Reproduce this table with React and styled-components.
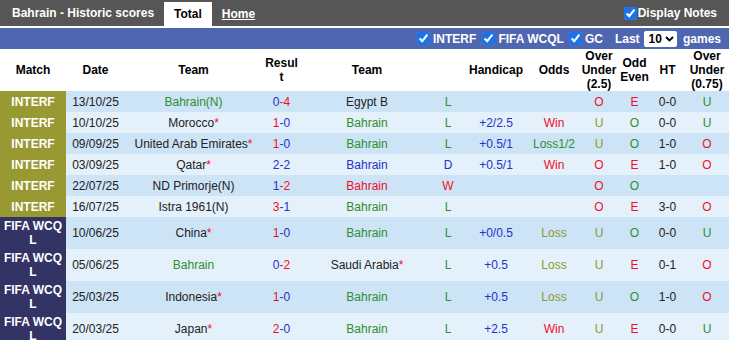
import React from "react";
import styled, { createGlobalStyle } from "styled-components";

const GlobalStyle = createGlobalStyle`
  body {
    margin: 0;
    background: #fff;
    font-family: "Liberation Sans", Arial, sans-serif;
  }
`;

const colors = {
  green: "#2f8f2f",
  olive: "#8c9c2c",
  red: "#f00f2a",
  blue: "#2233cc",
  dark: "#222",
};

const Wrap = styled.div`
  width: 729px;
`;

// Top bar with the title and tabs
const TopBar = styled.div`
  display: flex;
  align-items: flex-end;
  height: 26px;
  background: #565656;
  color: #fff;
  font-size: 12px;
  font-weight: bold;
`;

const Title = styled.div`
  align-self: center;
  padding: 0 10px 0 12px;
`;

const Tab = styled.div`
  height: 24px;
  line-height: 24px;
  padding: 0 10px;
  background: ${(p) => (p.$active ? "#fff" : "transparent")};
  color: ${(p) => (p.$active ? "#000" : "#fff")};
  text-decoration: ${(p) => (p.$active ? "none" : "underline")};
`;

const Notes = styled.label`
  margin-left: auto;
  align-self: center;
  display: flex;
  align-items: center;
  padding-right: 12px;
`;

const Check = styled.input.attrs({ type: "checkbox" })`
  width: 13px;
  height: 13px;
  margin: 0 ${(p) => p.$gap || 3}px 0 0;
  accent-color: #1a73e8;
`;

// Blue filter bar
const FilterBar = styled.div`
  display: flex;
  justify-content: flex-end;
  align-items: center;
  height: 21px;
  margin-top: 2px;
  padding-right: 8px;
  background: #4f66b0;
  color: #fff;
  font-size: 12px;
  font-weight: bold;
`;

const Filter = styled.label`
  display: flex;
  align-items: center;
  margin-left: ${(p) => p.$space || 4}px;
`;

const Select = styled.span`
  display: inline-flex;
  align-items: center;
  gap: 3px;
  height: 16px;
  margin: 0 6px 0 4px;
  padding: 0 3px 0 5px;
  background: #fff;
  color: #000;
  border-radius: 2px;
`;

const Table = styled.table`
  width: 729px;
  border-collapse: collapse;
  table-layout: fixed;
  font-size: 12px;
`;

const Th = styled.th`
  height: 42px;
  padding: 0 ${(p) => (p.$narrow ? 2 : 0)}px;
  line-height: 14px;
  font-weight: bold;
  color: #000;
  text-align: center;
  overflow-wrap: ${(p) => (p.$narrow ? "anywhere" : "normal")};
`;

const Row = styled.tr`
  height: ${(p) => (p.$tall ? 32 : 21)}px;
  background: ${(p) => (p.$dark ? "#cde3f6" : "#e4f0fa")};
`;

const Td = styled.td`
  padding: 0 1px;
  text-align: center;
  white-space: nowrap;
  color: ${(p) => colors[p.$c] || colors.dark};
`;

const MatchCell = styled.td`
  padding: 0 1px;
  text-align: center;
  line-height: 14px;
  font-weight: bold;
  word-break: break-all;
  color: #fff;
  background: ${(p) => (p.$kind === "INTERF" ? "#999933" : "#333366")};
`;

const Tone = styled.span`
  color: ${(p) => colors[p.$c] || colors.dark};
`;

const Star = styled.span`
  color: ${colors.red};
`;

const widths = [66, 59, 137, 39, 132, 30, 66, 50, 40, 31, 35, 44];

const rows = [
  ["INTERF", "13/10/25", "Bahrain(N)", "green", 0, 4, "Egypt B", null, "L", "", "", "O", "E", "0-0", "U"],
  ["INTERF", "10/10/25", "Morocco*", null, 1, 0, "Bahrain", "green", "L", "+2/2.5", "Win", "U", "O", "0-0", "U"],
  ["INTERF", "09/09/25", "United Arab Emirates*", null, 1, 0, "Bahrain", "green", "L", "+0.5/1", "Loss1/2", "U", "O", "1-0", "O"],
  ["INTERF", "03/09/25", "Qatar*", null, 2, 2, "Bahrain", "blue", "D", "+0.5/1", "Win", "O", "E", "1-0", "O"],
  ["INTERF", "22/07/25", "ND Primorje(N)", null, 1, 2, "Bahrain", "red", "W", "", "", "O", "O", "", ""],
  ["INTERF", "16/07/25", "Istra 1961(N)", null, 3, 1, "Bahrain", "green", "L", "", "", "O", "E", "3-0", "O"],
  ["FIFA WCQL", "10/06/25", "China*", null, 1, 0, "Bahrain", "green", "L", "+0/0.5", "Loss", "U", "O", "0-0", "U"],
  ["FIFA WCQL", "05/06/25", "Bahrain", "green", 0, 2, "Saudi Arabia*", null, "L", "+0.5", "Loss", "U", "E", "0-1", "O"],
  ["FIFA WCQL", "25/03/25", "Indonesia*", null, 1, 0, "Bahrain", "green", "L", "+0.5", "Loss", "U", "O", "1-0", "O"],
  ["FIFA WCQL", "20/03/25", "Japan*", null, 2, 0, "Bahrain", "green", "L", "+2.5", "Win", "U", "E", "0-0", "U"],
];

const resultColor = { L: "green", D: "blue", W: "red" };
const oddsColor = { Win: "red", "Loss1/2": "green", Loss: "olive" };
const ouColor = { O: "red", U: "olive" };
const oeColor = { O: "green", E: "red" };

// Team name, with the trailing star drawn in red
const TeamName = ({ name, tone }) => {
  const starred = name.endsWith("*");
  return (
    <Tone $c={tone}>
      {starred ? name.slice(0, -1) : name}
      {starred && <Star>*</Star>}
    </Tone>
  );
};

const Score = ({ home, away }) => {
  const tone = (a, b) => (a > b ? "red" : "blue");
  return (
    <>
      <Tone $c={tone(home, away)}>{home}</Tone>
      <Tone $c={tone(away, home)}>-{away}</Tone>
    </>
  );
};

const Chevron = () => (
  <svg width="9" height="6" viewBox="0 0 9 6">
    <path d="M1 1l3.5 3.5L8 1" fill="none" stroke="#000" strokeWidth="1.8" />
  </svg>
);

const App = () => {
  return (
    <Wrap>
      <GlobalStyle />
      <TopBar>
        <Title>Bahrain - Historic scores</Title>
        <Tab $active>Total</Tab>
        <Tab>Home</Tab>
        <Notes>
          <Check defaultChecked $gap={1} />
          Display Notes
        </Notes>
      </TopBar>

      <FilterBar>
        <Filter>
          <Check defaultChecked />
          INTERF
        </Filter>
        <Filter $space={6}>
          <Check defaultChecked />
          FIFA WCQL
        </Filter>
        <Filter $space={5}>
          <Check defaultChecked />
          GC
        </Filter>
        <Filter $space={12}>Last</Filter>
        <Select>
          10
          <Chevron />
        </Select>
        games
      </FilterBar>

      <Table>
        <colgroup>
          {widths.map((w, i) => (
            <col key={i} style={{ width: w }} />
          ))}
        </colgroup>
        <thead>
          <tr>
            <Th>Match</Th>
            <Th>Date</Th>
            <Th>Team</Th>
            <Th $narrow>Result</Th>
            <Th>Team</Th>
            <Th />
            <Th>Handicap</Th>
            <Th>Odds</Th>
            <Th>Over Under (2.5)</Th>
            <Th>Odd Even</Th>
            <Th>HT</Th>
            <Th>Over Under (0.75)</Th>
          </tr>
        </thead>
        <tbody>
          {rows.map((r, i) => (
            <Row key={i} $dark={i % 2 === 0} $tall={r[0] !== "INTERF"}>
              <MatchCell $kind={r[0]}>{r[0]}</MatchCell>
              <Td>{r[1]}</Td>
              <Td>
                <TeamName name={r[2]} tone={r[3]} />
              </Td>
              <Td>
                <Score home={r[4]} away={r[5]} />
              </Td>
              <Td>
                <TeamName name={r[6]} tone={r[7]} />
              </Td>
              <Td $c={resultColor[r[8]]}>{r[8]}</Td>
              <Td $c="blue">{r[9]}</Td>
              <Td $c={oddsColor[r[10]]}>{r[10]}</Td>
              <Td $c={ouColor[r[11]]}>{r[11]}</Td>
              <Td $c={oeColor[r[12]]}>{r[12]}</Td>
              <Td>{r[13]}</Td>
              <Td $c={r[14] === "O" ? "red" : "green"}>{r[14]}</Td>
            </Row>
          ))}
        </tbody>
      </Table>
    </Wrap>
  );
};

export default App;
